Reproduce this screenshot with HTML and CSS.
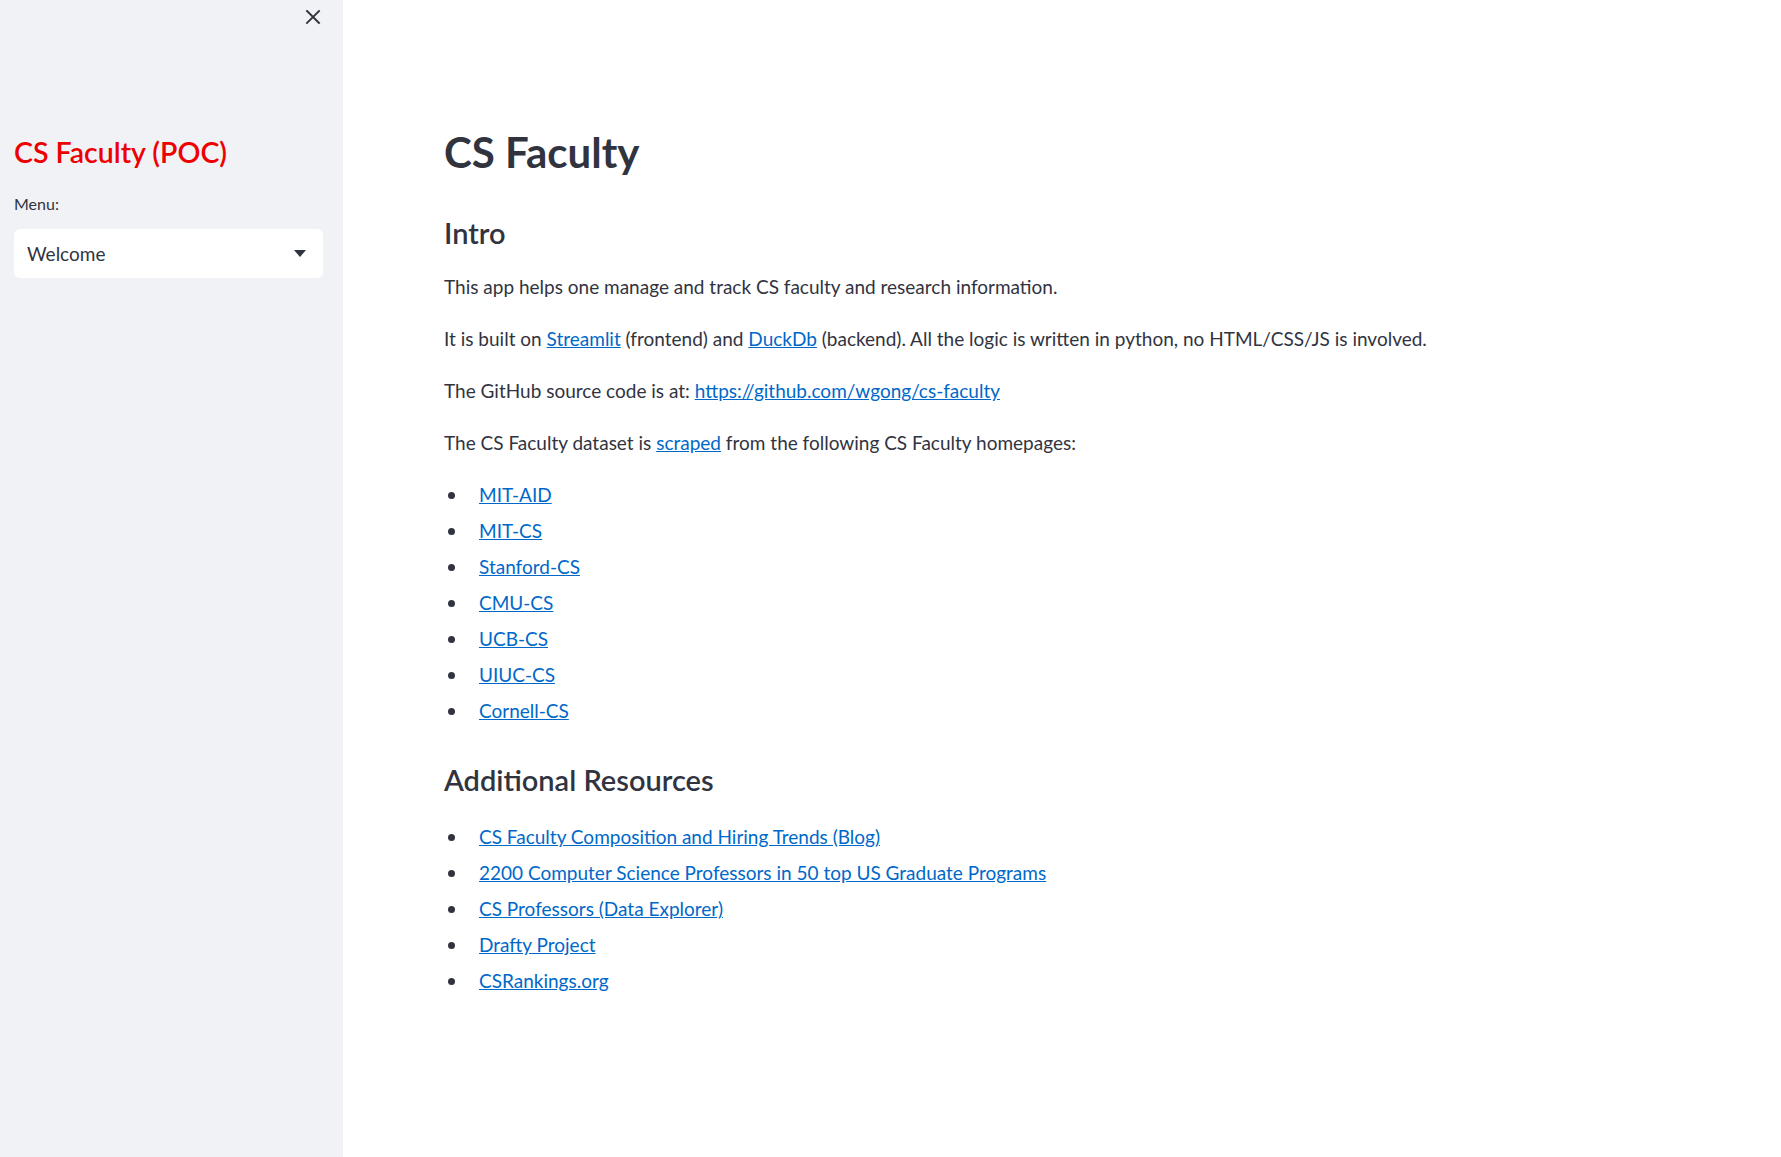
FILE: index.html
```html
<!DOCTYPE html>
<html lang="en">
<head>
<meta charset="utf-8">
<title>CS Faculty</title>
<link rel="stylesheet" href="styles.css">
</head>
<body>
<div class="app">
  <aside class="sidebar">
    <div class="sb-head">
      <button class="close-btn" aria-label="Close sidebar">
        <svg width="16" height="16" viewBox="0 0 16 16"><path d="M2 2 L14 14 M14 2 L2 14" stroke="#31333F" stroke-width="1.9" stroke-linecap="square" fill="none"/></svg>
      </button>
    </div>
    <h2 class="sb-title">CS Faculty (POC)</h2>
    <label class="sb-label">Menu:</label>
    <div class="select">
      <span class="select-value">Welcome</span>
      <svg class="caret" width="12" height="7" viewBox="0 0 12 7"><path d="M0 0 L12 0 L6 7 Z" fill="#31333F"/></svg>
    </div>
  </aside>
  <main class="main">
    <div class="content">
      <h1 class="title">CS Faculty</h1>
      <h2 class="section">Intro</h2>
      <p class="para">This app helps one manage and track CS faculty and research information.</p>
      <p class="para">It is built on <a href="#">Streamlit</a> (frontend) and <a href="#">DuckDb</a> (backend). All the logic is written in python, no HTML/CSS/JS is involved.</p>
      <p class="para">The GitHub source code is at: <a href="#">https://github.com/wgong/cs-faculty</a></p>
      <p class="para">The CS Faculty dataset is <a href="#">scraped</a> from the following CS Faculty homepages:</p>
      <ul class="links">
        <li><a href="#">MIT-AID</a></li>
        <li><a href="#">MIT-CS</a></li>
        <li><a href="#">Stanford-CS</a></li>
        <li><a href="#">CMU-CS</a></li>
        <li><a href="#">UCB-CS</a></li>
        <li><a href="#">UIUC-CS</a></li>
        <li><a href="#">Cornell-CS</a></li>
      </ul>
      <h2 class="section section-2">Additional Resources</h2>
      <ul class="links links-2">
        <li><a href="#">CS Faculty Composition and Hiring Trends (Blog)</a></li>
        <li><a href="#">2200 Computer Science Professors in 50 top US Graduate Programs</a></li>
        <li><a href="#">CS Professors (Data Explorer)</a></li>
        <li><a href="#">Drafty Project</a></li>
        <li><a href="#">CSRankings.org</a></li>
      </ul>
    </div>
  </main>
</div>
</body>
</html>
```

FILE: styles.css
```css
* { box-sizing: border-box; }
html, body { margin: 0; padding: 0; height: 100%; }
body {
  font-family: Lato, "Liberation Sans", sans-serif;
  color: #31333F;
  background: #ffffff;
}
.app {
  display: flex;
  min-height: 100vh;
}
.sidebar {
  width: 343px;
  flex: 0 0 343px;
  background: #f0f2f6;
  padding: 0 20px 0 14px;
}
.sb-head {
  height: 34px;
  display: flex;
  justify-content: flex-end;
  align-items: center;
}
.close-btn {
  width: 20px;
  height: 20px;
  padding: 0;
  border: 0;
  background: transparent;
  display: flex;
  align-items: center;
  justify-content: center;
}
.sb-title {
  margin: 98px 0 0 0;
  font-size: 28.5px;
  line-height: 40px;
  font-weight: 600;
  color: #ee0000;
}
.sb-label {
  display: block;
  margin-top: 20px;
  font-size: 16px;
  line-height: 24px;
}
.select {
  margin-top: 13px;
  height: 49px;
  background: #ffffff;
  border-radius: 6px;
  display: flex;
  align-items: center;
  justify-content: space-between;
  padding: 0 17px 0 13px;
}
.select-value {
  font-size: 19px;
}
.caret { display: block; }
.main {
  flex: 1;
  padding: 125px 0 0 101px;
}
.content { max-width: 1100px; }
.title {
  margin: 0;
  font-size: 42px;
  line-height: 54px;
  font-weight: 700;
}
.section {
  margin: 36px 0 20px 0;
  font-size: 29px;
  line-height: 36px;
  font-weight: 600;
}
.para {
  margin: 0 0 20px 0;
  font-size: 19px;
  line-height: 32px;
}
a { color: #0068c9; text-decoration: underline; }
.links {
  margin: 0;
  padding: 0;
  list-style: none;
  font-size: 19px;
  line-height: 32px;
}
.links li {
  display: flex;
  align-items: center;
  margin-bottom: 4px;
}
.links li::before {
  content: "";
  width: 7px;
  height: 7px;
  border-radius: 50%;
  background: #31333F;
  margin: 0 24px 0 4px;
  flex: 0 0 7px;
}
.section-2 { margin-top: 35px; margin-bottom: 23px; }
```
